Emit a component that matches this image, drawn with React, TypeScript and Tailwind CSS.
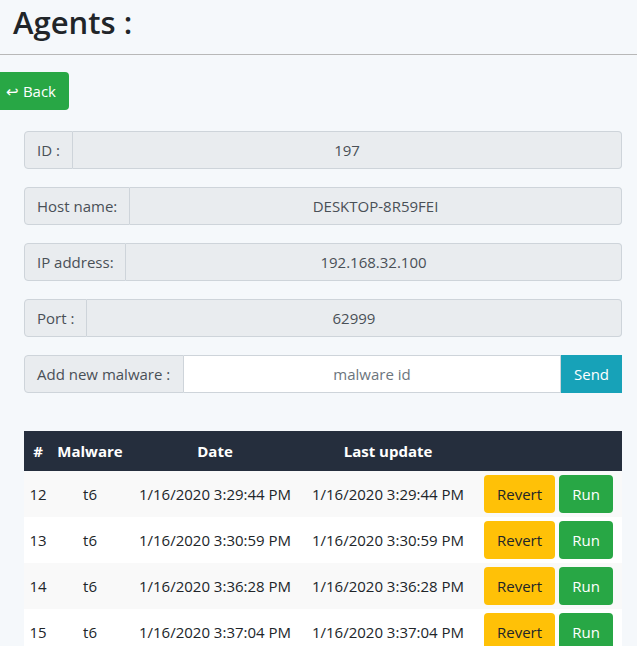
import React from "react";

const font = { fontFamily: '"Open Sans", "Noto Sans", sans-serif' };

function Field({ label, value, labelW }: { label: string; value: string; labelW: string }) {
  return (
    <div className="flex h-[38px] w-full text-[15px] text-[#495057]">
      <div className={`flex items-center whitespace-nowrap ${labelW} shrink-0 px-[12px] bg-[#e9ecef] border border-[#ced4da] rounded-l-[4px]`}>
        {label}
      </div>
      <div className="flex-1 flex items-center justify-center bg-[#e9ecef] border border-l-0 border-[#ced4da] rounded-r-[4px]">
        {value}
      </div>
    </div>
  );
}

const rows = [
  { id: "12", d: "1/16/2020 3:29:44 PM" },
  { id: "13", d: "1/16/2020 3:30:59 PM" },
  { id: "14", d: "1/16/2020 3:36:28 PM" },
  { id: "15", d: "1/16/2020 3:37:04 PM" },
];

export default function App() {
  return (
    <div className="w-[637px] h-[646px] overflow-hidden bg-[#f5f8fb] text-[#212529]" style={font}>
      <div className="h-[55px] border-b border-[#b8b8b8] pl-[13px] pt-[1px]">
        <h1 className="text-[31px] font-semibold leading-[42px] text-[#212529]">Agents :</h1>
      </div>
      <div className="pt-[17px]">
        <button className="h-[38px] w-[69px] bg-[#28a745] text-white text-[15px] rounded-r-[4px] flex items-center pl-[6px]">
          ↩ Back
        </button>
      </div>
      <div className="ml-[24px] w-[598px] mt-[21px] flex flex-col gap-[18px]">
        <Field label="ID :" value="197" labelW="w-[49px]" />
        <Field label="Host name:" value="DESKTOP-8R59FEI" labelW="w-[106px]" />
        <Field label="IP address:" value="192.168.32.100" labelW="w-[102px]" />
        <Field label="Port :" value="62999" labelW="w-[63px]" />
        <div className="flex h-[38px] w-full text-[15px] text-[#495057]">
          <div className="flex items-center whitespace-nowrap w-[160px] shrink-0 px-[12px] bg-[#e9ecef] border border-[#ced4da] rounded-l-[4px]">
            Add new malware :
          </div>
          <input
            className="flex-1 min-w-0 bg-white border border-l-0 border-[#ced4da] text-center text-[15px] placeholder:text-[#6c757d] outline-none"
            placeholder="malware id"
            style={font}
          />
          <button className="w-[61px] shrink-0 bg-[#17a2b8] text-white text-[15px]">Send</button>
        </div>
      </div>
      <table className="ml-[24px] mt-[38px] w-[598px] table-fixed border-collapse text-[15px]">
        <colgroup>
          <col className="w-[28px]" />
          <col className="w-[76px]" />
          <col className="w-[174px]" />
          <col className="w-[172px]" />
          <col className="w-[148px]" />
        </colgroup>
        <thead>
          <tr className="h-[40px] bg-[#252e3d] text-white font-bold">
            <th className="text-center">#</th>
            <th className="text-center">Malware</th>
            <th className="text-center">Date</th>
            <th className="text-center">Last update</th>
            <th></th>
          </tr>
        </thead>
        <tbody className="text-[#212529]">
          {rows.map((r, i) => (
            <tr key={r.id} className={`h-[46px] ${i % 2 === 0 ? "bg-[#f9f9f9]" : "bg-white"}`}>
              <td className="text-center">{r.id}</td>
              <td className="text-center">t6</td>
              <td className="text-center whitespace-nowrap">{r.d}</td>
              <td className="text-center whitespace-nowrap">{r.d}</td>
              <td>
                <div className="flex gap-[4px] pl-[10px]">
                  <button className="h-[38px] w-[71px] bg-[#ffc107] text-[#212529] rounded-[4px]">Revert</button>
                  <button className="h-[38px] w-[54px] bg-[#28a745] text-white rounded-[4px]">Run</button>
                </div>
              </td>
            </tr>
          ))}
        </tbody>
      </table>
    </div>
  );
}
